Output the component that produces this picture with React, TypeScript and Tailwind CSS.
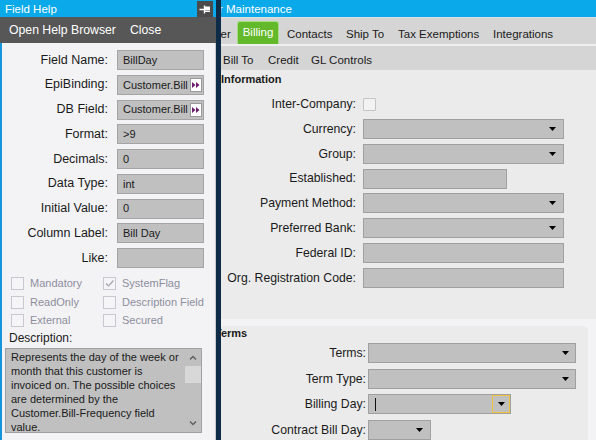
import React from "react";

const font = "font-['Liberation_Sans',Arial,sans-serif]";

function Arrow() {
  return (
    <svg width="7" height="4" viewBox="0 0 7 4" className="shrink-0">
      <path d="M0 0H7L3.5 4Z" fill="#000" />
    </svg>
  );
}

function MoreButton() {
  return (
    <span className="ml-auto mr-[1px] w-[12px] h-[14px] bg-white border border-[#9a9a9a] flex items-center justify-center">
      <svg width="8" height="6" viewBox="0 0 8 6">
        <path d="M0 0L3.5 3L0 6ZM4 0L7.5 3L4 6Z" fill="#6b1f6e" />
      </svg>
    </span>
  );
}

function HelpField({ label, value, more }: { label: string; value: string; more?: boolean }) {
  return (
    <div className="flex items-center h-[20px]">
      <div className="w-[106px] text-right text-[12.5px] text-[#1a1a1a] whitespace-nowrap">{label}</div>
      <div className="ml-[9px] w-[87px] h-[20px] bg-[#c0c0c0] border border-[#a4a4a4] flex items-center pl-[5px] text-[11px] text-[#1a1a1a] whitespace-nowrap">
        <span>{value}</span>
        {more && <MoreButton />}
      </div>
    </div>
  );
}

function Check({ label, checked }: { label: string; checked?: boolean }) {
  return (
    <div className="flex items-center h-[13px]">
      <span className="w-[13px] h-[13px] bg-[#f5f5f7] border border-[#c8c8d0] flex items-center justify-center">
        {checked && (
          <svg width="11" height="11" viewBox="0 0 11 11">
            <path d="M2 5.5L4.5 8L9.5 2.5" fill="none" stroke="#a4a4ac" strokeWidth="1.2" />
          </svg>
        )}
      </span>
      <span className="ml-[6px] text-[11px] text-[#8e8e9e] whitespace-nowrap">{label}</span>
    </div>
  );
}

function FormRow({ label, labelW, children }: { label: string; labelW: string; children: React.ReactNode }) {
  return (
    <div className="flex items-center h-[20px]">
      <div className={`${labelW} text-right text-[12.25px] text-[#1a1a1a] whitespace-nowrap shrink-0`}>{label}</div>
      {children}
    </div>
  );
}

function Box({ w, arrow, arrowMr = "mr-[7px]" }: { w: string; arrow?: boolean; arrowMr?: string }) {
  return (
    <div className={`${w} h-[20px] bg-[#c0c0c0] border border-[#a0a0a0] flex items-center justify-end shrink-0`}>
      {arrow && <span className={arrowMr}><Arrow /></span>}
    </div>
  );
}

function FieldHelp() {
  return (
    <div className="w-[216px] h-full flex flex-col shrink-0">
      <div className="h-[17px] bg-[#0aa9ea] flex items-center">
        <span className="pl-[5px] text-white text-[11.5px] leading-[14px]">Field Help</span>
        <span className="ml-auto mr-[3px] w-[16px] h-[16px] bg-[#4b4b4b] flex items-center justify-center">
          <svg width="14" height="14" viewBox="0 0 14 14">
            <path d="M1.5 7.5H6.5M6.5 3.5V11.5" stroke="#fff" strokeWidth="1.4" fill="none" />
            <rect x="7" y="4.5" width="5" height="4" fill="#fff" />
            <path d="M7 9.5H12" stroke="#fff" strokeWidth="1" />
          </svg>
        </span>
      </div>
      <div className="h-[26px] bg-[#575757] flex items-center text-white text-[12.25px]">
        <span className="ml-[9px]">Open Help Browser</span>
        <span className="ml-[14px]">Close</span>
      </div>
      <div className="flex-1 bg-[#f3f3f5] border-l-2 border-[#1596dc] border-r border-r-[#c8c8d0] flex flex-col">
        <div className="mt-[7px] flex flex-col gap-[4.75px]">
          <HelpField label="Field Name:" value="BillDay" />
          <HelpField label="EpiBinding:" value="Customer.Bill" more />
          <HelpField label="DB Field:" value="Customer.Bill" more />
          <HelpField label="Format:" value=">9" />
          <HelpField label="Decimals:" value="0" />
          <HelpField label="Data Type:" value="int" />
          <HelpField label="Initial Value:" value="0" />
          <HelpField label="Column Label:" value="Bill Day" />
          <HelpField label="Like:" value="" />
        </div>
        <div className="mt-[9px] pl-[9px] grid grid-cols-[92px_1fr] gap-y-[5.5px]">
          <Check label="Mandatory" />
          <Check label="SystemFlag" checked />
          <Check label="ReadOnly" />
          <Check label="Description Field" />
          <Check label="External" />
          <Check label="Secured" />
        </div>
        <div className="mt-[4px] pl-[7px] h-[14px] leading-[14px] text-[12px] text-[#1a1a1a]">Description:</div>
        <div className="mt-[3px] ml-[3px] w-[197px] h-[85px] bg-[#c0c0c0] border border-[#a0a0a0] flex">
          <div className="flex-1 pl-[5px] pt-[1px] leading-[14px] text-[11px] text-[#1a1a1a] whitespace-nowrap overflow-hidden">
            Represents the day of the week or
            <br />
            month that this customer is
            <br />
            invoiced on. The possible choices
            <br />
            are determined by the
            <br />
            Customer.Bill-Frequency field
            <br />
            value.
          </div>
          <div className="w-[16px] flex flex-col">
            <div className="h-[17px] flex items-center justify-center">
              <svg width="8" height="5" viewBox="0 0 8 5">
                <path d="M1 4.5L4 1.5L7 4.5" fill="none" stroke="#5c5c5c" strokeWidth="1.3" />
              </svg>
            </div>
            <div className="h-[17px] bg-[#d8d8d8]" />
            <div className="flex-1" />
            <div className="h-[17px] flex items-center justify-center">
              <svg width="8" height="5" viewBox="0 0 8 5">
                <path d="M1 0.5L4 3.5L7 0.5" fill="none" stroke="#5c5c5c" strokeWidth="1.3" />
              </svg>
            </div>
          </div>
        </div>
      </div>
    </div>
  );
}

function Maintenance() {
  return (
    <div className="flex-1 h-full flex flex-col overflow-hidden bg-[#f3f3f5]">
      <div className="h-[17px] bg-[#0aa9ea] flex items-center shrink-0">
        <span className="ml-[-48px] text-white text-[11.5px] leading-[14px] whitespace-nowrap">Customer Maintenance</span>
      </div>
      <div className="h-[27px] bg-[#d5d5d5] border-t border-[#dedede] flex items-start text-[11.5px] text-[#1a1a1a] shrink-0">
        <div className="w-[16px] shrink-0 mt-[9px] leading-[14px] whitespace-nowrap">
          <span className="inline-block ml-[-40px]">Customer</span>
        </div>
        <div className="w-[42px] h-[23px] mt-[3px] shrink-0 bg-[#63b92a] border border-[#a8dc85] border-b-0 rounded-t-[3px] text-white text-center pt-[3px] leading-[14px]">
          Billing
        </div>
        <div className="w-[8px] shrink-0" />
        <div className="w-[59px] shrink-0 mt-[9px] leading-[14px]">Contacts</div>
        <div className="w-[52px] shrink-0 mt-[9px] leading-[14px] whitespace-nowrap">Ship To</div>
        <div className="w-[95px] shrink-0 mt-[9px] leading-[14px] whitespace-nowrap">Tax Exemptions</div>
        <div className="shrink-0 mt-[9px] leading-[14px]">Integrations</div>
      </div>
      <div className="h-[2px] bg-[#efefef] shrink-0" />
      <div className="h-[24px] bg-[#d5d5d5] flex items-start text-[11.5px] text-[#1a1a1a] shrink-0">
        <div className="w-[47px] pl-[2px] mt-[7px] leading-[14px] whitespace-nowrap">Bill To</div>
        <div className="w-[43px] mt-[7px] leading-[14px]">Credit</div>
        <div className="mt-[7px] leading-[14px] whitespace-nowrap">GL Controls</div>
      </div>
      <div className="h-[249px] bg-[#ebebeb] flex flex-col shrink-0">
        <div className="mt-[2px] h-[14px] leading-[14px] text-[11px] font-bold text-[#1a1a1a]">Information</div>
        <div className="mt-[8px] flex flex-col gap-[4.85px]">
          <FormRow label="Inter-Company:" labelW="w-[135px]">
            <span className="ml-[7px] w-[13px] h-[13px] bg-[#f2f2f2] border border-[#c4c4c4] rounded-[1px]" />
          </FormRow>
          <FormRow label="Currency:" labelW="w-[135px]">
            <div className="ml-[7px]"><Box w="w-[201px]" arrow /></div>
          </FormRow>
          <FormRow label="Group:" labelW="w-[135px]">
            <div className="ml-[7px]"><Box w="w-[201px]" arrow /></div>
          </FormRow>
          <FormRow label="Established:" labelW="w-[135px]">
            <div className="ml-[7px]"><Box w="w-[144px]" /></div>
          </FormRow>
          <FormRow label="Payment Method:" labelW="w-[135px]">
            <div className="ml-[7px]"><Box w="w-[201px]" arrow /></div>
          </FormRow>
          <FormRow label="Preferred Bank:" labelW="w-[135px]">
            <div className="ml-[7px]"><Box w="w-[201px]" arrow /></div>
          </FormRow>
          <FormRow label="Federal ID:" labelW="w-[135px]">
            <div className="ml-[7px]"><Box w="w-[201px]" /></div>
          </FormRow>
          <FormRow label="Org. Registration Code:" labelW="w-[135px]">
            <div className="ml-[7px]"><Box w="w-[201px]" /></div>
          </FormRow>
        </div>
      </div>
      <div className="h-[7px] shrink-0" />
      <div className="flex-1 flex">
        <div className="w-[367px] bg-[#ebebeb] rounded-tr-[5px] flex flex-col">
          <div className="h-[14px] leading-[14px] text-[11px] font-bold text-[#1a1a1a] whitespace-nowrap">
            <span className="inline-block ml-[-6px]">Terms</span>
          </div>
          <div className="mt-[3px] flex flex-col gap-[5.7px]">
            <FormRow label="Terms:" labelW="w-[145px]">
              <div className="ml-[2px]"><Box w="w-[208px]" arrow arrowMr="mr-[6px]" /></div>
            </FormRow>
            <FormRow label="Term Type:" labelW="w-[145px]">
              <div className="ml-[2px]"><Box w="w-[208px]" arrow arrowMr="mr-[6px]" /></div>
            </FormRow>
            <FormRow label="Billing Day:" labelW="w-[145px]">
              <div className="ml-[2px] w-[143px] h-[20px] bg-[#c0c0c0] border border-[#a0a0a0] flex items-center">
                <span className="ml-[6px] w-[1px] h-[13px] bg-[#111]" />
                <span className="ml-auto w-[18px] h-[18px] border border-[#f0c43c] flex items-center justify-center">
                  <Arrow />
                </span>
              </div>
            </FormRow>
            <FormRow label="Contract Bill Day:" labelW="w-[145px]">
              <div className="ml-[2px]"><Box w="w-[63px]" arrow /></div>
            </FormRow>
          </div>
        </div>
        <div className="flex-1" />
      </div>
    </div>
  );
}

export default function App() {
  return (
    <div className={`w-[596px] h-[440px] flex overflow-hidden text-[12px] ${font}`}>
      <FieldHelp />
      <div className="w-[5px] h-full bg-[#0e2c48] shrink-0" />
      <Maintenance />
    </div>
  );
}
